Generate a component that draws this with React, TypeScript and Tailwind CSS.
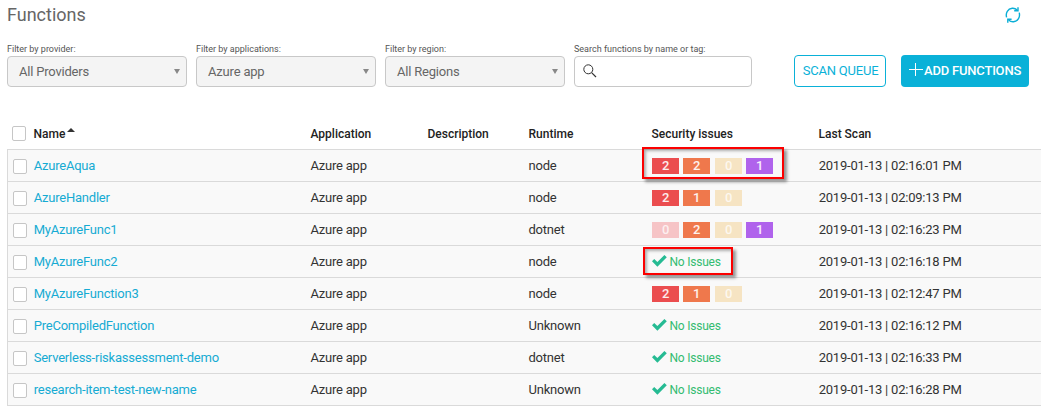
import type { ReactNode } from 'react';

type Row = { name: string; runtime: string; issues: number[] | null; scan: string; mark?: string };

const rows: Row[] = [
  { name: 'AzureAqua', runtime: 'node', issues: [2, 2, 0, 1], scan: '02:16:01 PM', mark: 'left-[-10px] top-[-3px] h-[32px] w-[142px]' },
  { name: 'AzureHandler', runtime: 'node', issues: [2, 1, 0], scan: '02:09:13 PM' },
  { name: 'MyAzureFunc1', runtime: 'dotnet', issues: [0, 2, 0, 1], scan: '02:16:23 PM' },
  { name: 'MyAzureFunc2', runtime: 'node', issues: null, scan: '02:16:18 PM', mark: 'left-[-9px] top-[1px] h-[28px] w-[90px]' },
  { name: 'MyAzureFunction3', runtime: 'node', issues: [2, 1, 0], scan: '02:12:47 PM' },
  { name: 'PreCompiledFunction', runtime: 'Unknown', issues: null, scan: '02:16:12 PM' },
  { name: 'Serverless-riskassessment-demo', runtime: 'dotnet', issues: null, scan: '02:16:33 PM' },
  { name: 'research-item-test-new-name', runtime: 'Unknown', issues: null, scan: '02:16:28 PM' },
];

const active = ['bg-[#eb4d4f]', 'bg-[#ef784c]', 'bg-[#f6e4c3]', 'bg-[#b063ec]'];
const spacing = ['', 'ml-1', 'ml-[5px]', 'ml-1'];

function Checkbox() {
  return <span className="block h-[15px] w-[14px] rounded-[2px] border border-[#c6c6c6] bg-white" />;
}

function Check() {
  return (
    <svg className="h-[12px] w-[15px] shrink-0" viewBox="0 0 15 12">
      <path d="M0 6.2 2.2 4 5.4 7.1 12.4 0 14.8 2.3 5.4 11.7Z" fill="#26bb93" />
    </svg>
  );
}

function Field({ label, width, children }: { label: string; width: string; children: ReactNode }) {
  return (
    <div className={width}>
      <div className="h-[13px] whitespace-nowrap text-[9px] leading-[12px] text-[#555]">{label}</div>
      {children}
    </div>
  );
}

function Select({ label, value }: { label: string; value: string }) {
  return (
    <Field label={label} width="w-[180px]">
      <div className="flex h-[31px] items-center justify-between rounded-[4px] border border-[#c8c8c8] bg-[#f4f4f4] pl-[11px] pr-[6px] text-[13px] tracking-[-0.2px] text-[#666]">
        <span>{value}</span>
        <svg className="h-[5px] w-[6px]" viewBox="0 0 6 5">
          <path d="M0 0h6L3 5Z" fill="#888" />
        </svg>
      </div>
    </Field>
  );
}

export default function App() {
  return (
    <div className="h-[415px] w-[1041px] overflow-hidden bg-white font-['Roboto',sans-serif] text-[13px] text-[#333]">
      <header className="flex h-[43px] justify-between pl-[7px] pr-[20px]">
        <h1 className="pt-[3px] text-[18px] leading-[24px] text-[#666]">Functions</h1>
        <svg className="mt-[7px] h-[16px] w-[16px]" viewBox="0 0 16 16" fill="none" stroke="#0aaed6" strokeWidth="1.4">
          <path d="M1.6 10.4C.4 6 2.8 1.7 7.2 1.3c1.9-.2 3.6.5 5 1.8M14.2 5.6c1.2 4.4-1.2 8.7-5.6 9.1-1.9.2-3.6-.5-5-1.8" />
          <path d="M13 .3v3.4H9.2M2.8 15.7v-3.4h3.8" />
        </svg>
      </header>

      <div className="flex h-[72px] pl-[7px]">
        <div className="flex gap-[9px]">
          <Select label="Filter by provider:" value="All Providers" />
          <Select label="Filter by applications:" value="Azure app" />
          <Select label="Filter by region:" value="All Regions" />
          <Field label="Search functions by name or tag:" width="w-[178px]">
            <div className="flex h-[31px] items-center rounded-[4px] border border-[#c8c8c8] bg-white pb-[1px] pl-[8px]">
              <svg className="h-[14px] w-[14px]" viewBox="0 0 14 14" fill="none" stroke="#333">
                <circle cx="5.3" cy="5.3" r="4.5" strokeWidth="1" />
                <path d="m8.6 8.6 4.4 4.4" strokeWidth="1.2" />
              </svg>
            </div>
          </Field>
        </div>
        <button className="ml-[42px] mt-[12px] h-[32px] w-[92px] whitespace-nowrap rounded-[4px] border border-[#0ab1d8] pl-[1px] text-[13px] tracking-[-0.2px] text-[#0ab1d8]">SCAN QUEUE</button>
        <button className="ml-[15px] mt-[12px] flex h-[32px] w-[128px] items-center whitespace-nowrap rounded-[4px] bg-[#0ab1d8] pl-[8px] text-[13px] font-medium tracking-[-0.2px] text-white">
          <svg className="mb-[3px] mr-[1px] h-[13px] w-[14px] shrink-0" viewBox="0 0 14 13">
            <path d="M0 6.5h14M6.5 0v13" stroke="white" />
          </svg>
          ADD FUNCTIONS
        </button>
      </div>

      <div className="grid h-[34px] grid-cols-[33.5px_277px_117px_101px_123px_167px_1fr] items-center pb-[1px] pt-[4px] text-[12px] font-medium leading-[14px] text-[#222]">
        <div className="pl-[12px]"><Checkbox /></div>
        <div className="flex">
          Name
          <svg className="ml-[2px] mt-[1px] h-[4px] w-[8px]" viewBox="0 0 8 4"><path d="M0 4 4 0 8 4Z" fill="#333" /></svg>
        </div>
        <div>Application</div>
        <div>Description</div>
        <div>Runtime</div>
        <div>Security issues</div>
        <div>Last Scan</div>
      </div>

      <div className="ml-[7px] border-b border-l border-[#dadada] bg-[#f9f9f9] tracking-[-0.22px]">
        {rows.map((row) => (
          <div key={row.name} className="grid h-[32px] grid-cols-[25.7px_276.8px_218px_123.5px_166.7px_1fr] items-center border-t border-[#dadada]">
            <div className="pl-[5px] pt-[2px]"><Checkbox /></div>
            <div className="text-[#16abd3]">{row.name}</div>
            <div>Azure app</div>
            <div>{row.runtime}</div>
            <div className="relative flex h-[31px] items-center">
              {row.issues ? (
                <div className="flex pt-[1px]">
                  {row.issues.map((count, i) => (
                    <span key={i} className={`flex h-[16px] w-[27px] items-center justify-center text-[13px] font-medium ${spacing[i]} ${count === 0 && i === 0 ? 'bg-[#f6c4c6]' : active[i]} ${count === 0 ? 'text-white/75' : 'text-white/90'}`}>{count}</span>
                  ))}
                </div>
              ) : (
                <div className="flex items-center gap-[2.5px] text-[12px] leading-[14px] text-[#33bc71]">
                  <span className="pb-[2px]"><Check /></span>
                  <span className="pt-[1px]">No Issues</span>
                </div>
              )}
              {row.mark && <span className={`absolute border-2 border-[#fb0000] shadow-[3px_3px_3px_rgba(0,0,0,0.4),inset_2px_2px_3px_rgba(0,0,0,0.3)] ${row.mark}`} />}
            </div>
            <div>2019-01-13 | {row.scan}</div>
          </div>
        ))}
      </div>
    </div>
  );
}
